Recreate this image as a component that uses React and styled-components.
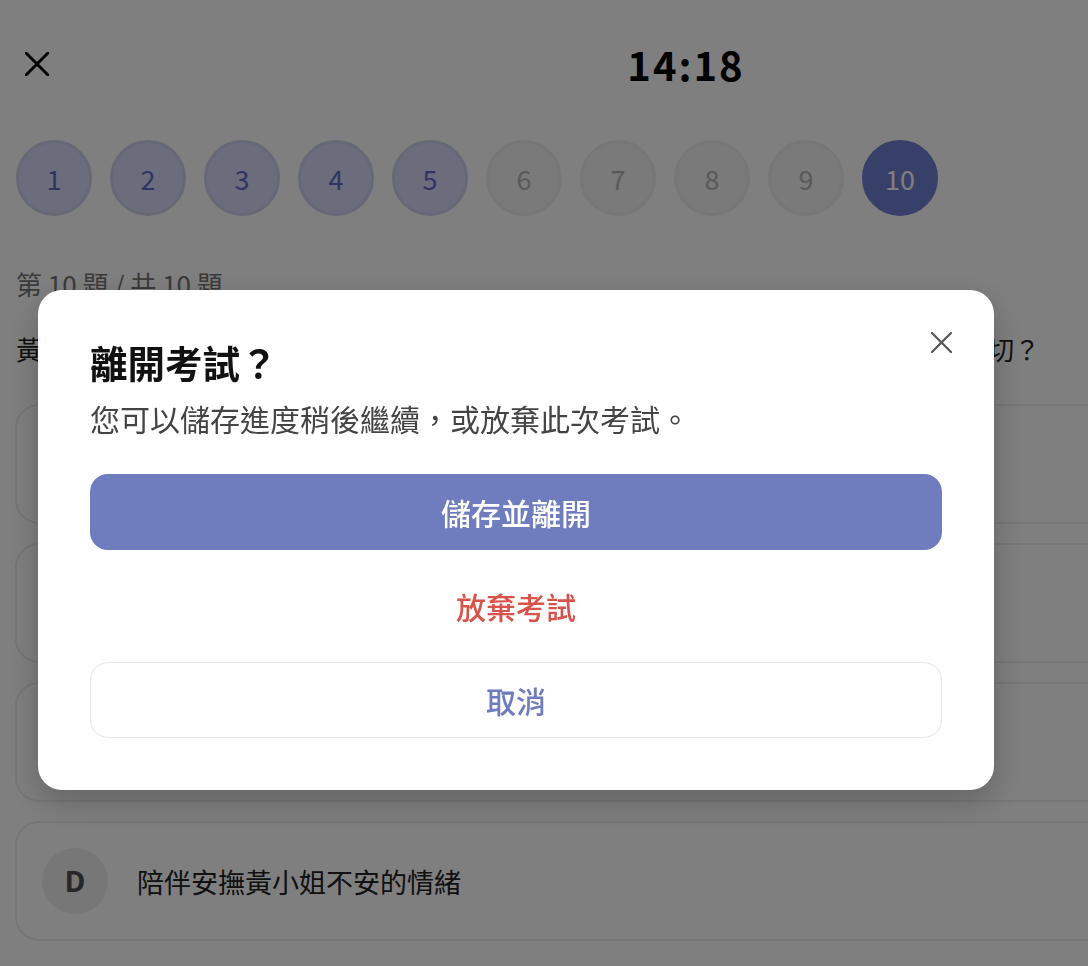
import React from "react";
import styled, { createGlobalStyle } from "styled-components";

const GlobalStyle = createGlobalStyle`
    html, body {
        margin: 0;
        padding: 0;
        overflow: hidden;
        background: #ffffff;
    }
    body {
        font-family: "Noto Sans CJK TC", "Noto Sans", sans-serif;
        color: #222;
    }
    * {
        box-sizing: border-box;
    }
`;

const Page = styled.div`
    width: 1372px;
    height: 966px;
    padding: 0 15px;
`;

const Header = styled.header`
    height: 128px;
    display: grid;
    grid-template-columns: 1fr auto 1fr;
    align-items: center;
    margin-bottom: 4px;
`;

const IconButton = styled.button`
    border: none;
    background: none;
    padding: 0;
    margin: ${(p) => p.margin || "0"};
    display: flex;
    align-items: center;
    justify-content: center;
    justify-self: ${(p) => p.align || "start"};
    color: ${(p) => p.color || "#000"};
    cursor: pointer;
`;

const Timer = styled.div`
    font-size: 40px;
    font-weight: 700;
    letter-spacing: 2px;
    color: #000;
`;

const Steps = styled.div`
    display: flex;
    gap: 18px;
    padding-top: 8px;
    padding-left: 1px;
`;

const Step = styled.div`
    width: 76px;
    height: 76px;
    border-radius: 50%;
    display: flex;
    align-items: center;
    justify-content: center;
    font-size: 27px;
    background: ${(p) =>
        p.state === "current" ? "#7080d2" : p.state === "done" ? "#d8dbf8" : "#f4f4f4"};
    color: ${(p) =>
        p.state === "current" ? "#ffffff" : p.state === "done" ? "#5f6bbe" : "#b2b2b2"};
    border: 3px solid
        ${(p) => (p.state === "current" ? "#7080d2" : p.state === "done" ? "#cdd0ec" : "#eeeeee")};
`;

const Counter = styled.div`
    margin-top: 52px;
    padding-left: 1px;
    font-size: 26px;
    line-height: 32px;
    color: #757575;
`;

const Question = styled.div`
    margin-top: 31px;
    padding-left: 1px;
    font-size: 25.6px;
    line-height: 36px;
    color: #222;
    white-space: nowrap;
`;

const Options = styled.div`
    margin-top: 37px;
    display: flex;
    flex-direction: column;
    gap: 19px;
`;

const OptionCard = styled.div`
    height: 120px;
    border: 2px solid #ececec;
    border-radius: 24px;
    display: flex;
    align-items: center;
    gap: 29px;
    padding-left: 25px;
`;

const OptionLetter = styled.div`
    width: 66px;
    height: 66px;
    border-radius: 50%;
    background: #eeeeee;
    display: flex;
    align-items: center;
    justify-content: center;
    font-family: "Noto Sans", sans-serif;
    font-size: 28px;
    font-weight: 700;
    color: #4e4e4e;
`;

const OptionText = styled.div`
    font-size: 27px;
    color: #222;
`;

const Overlay = styled.div`
    position: fixed;
    inset: 0;
    background: rgba(0, 0, 0, 0.5);
    display: flex;
    align-items: flex-start;
    padding: 290px 0 0 38px;
`;

const Modal = styled.div`
    width: 956px;
    height: 500px;
    background: #ffffff;
    border-radius: 24px;
    box-shadow: 0 12px 32px rgba(0, 0, 0, 0.22);
    padding: 38px 52px 52px;
    display: flex;
    flex-direction: column;
`;

const ModalHead = styled.div`
    display: flex;
    justify-content: space-between;
    align-items: flex-start;
`;

const ModalTitle = styled.h2`
    margin: 10px 0 0;
    font-size: 37.5px;
    line-height: 48px;
    font-weight: 700;
    color: #111;
`;

const ModalText = styled.p`
    margin: 12px 0 0;
    font-size: 30px;
    line-height: 40px;
    color: #444;
`;

const Actions = styled.div`
    margin-top: 36px;
    display: flex;
    flex-direction: column;
    gap: 18px;
`;

const ActionButton = styled.button`
    height: 76px;
    width: 100%;
    border-radius: 18px;
    font-family: "Noto Sans CJK TC", "Noto Sans", sans-serif;
    font-size: 30px;
    font-weight: 500;
    cursor: pointer;
    background: ${(p) => (p.variant === "primary" ? "#6f7cbe" : "#ffffff")};
    color: ${(p) =>
        p.variant === "primary" ? "#ffffff" : p.variant === "danger" ? "#d9534a" : "#6f7cbe"};
    border: ${(p) => (p.variant === "outline" ? "1.5px solid #e6e6e6" : "none")};
`;

const CloseIcon = ({ size, stroke }) => (
    <svg width={size} height={size} viewBox={`0 0 ${size} ${size}`} fill="none">
        <path
            d={`M1 1L${size - 1} ${size - 1}M${size - 1} 1L1 ${size - 1}`}
            stroke="currentColor"
            strokeWidth={stroke}
            strokeLinecap="round"
        />
    </svg>
);

const steps = [1, 2, 3, 4, 5, 6, 7, 8, 9, 10];

const options = [
    { key: "A", text: "立即通知醫師給予鎮靜劑" },
    { key: "B", text: "告訴黃小姐不用擔心手術" },
    { key: "C", text: "轉移話題避免討論手術" },
    { key: "D", text: "陪伴安撫黃小姐不安的情緒" },
];

const App = () => (
    <>
        <GlobalStyle />
        <Page>
            <Header>
                <IconButton margin="0 0 0 10px">
                    <CloseIcon size={24} stroke={3} />
                </IconButton>
                <Timer>14:18</Timer>
                <div />
            </Header>
            <Steps>
                {steps.map((n) => (
                    <Step key={n} state={n === 10 ? "current" : n <= 5 ? "done" : "todo"}>
                        {n}
                    </Step>
                ))}
            </Steps>
            <Counter>第 10 題 / 共 10 題</Counter>
            <Question>
                黃小姐因手術前感到緊張焦慮，一直詢問手術是否會順利，此時護理師的處置何者最適切？
            </Question>
            <Options>
                {options.map((o) => (
                    <OptionCard key={o.key}>
                        <OptionLetter>{o.key}</OptionLetter>
                        <OptionText>{o.text}</OptionText>
                    </OptionCard>
                ))}
            </Options>
        </Page>
        <Overlay>
            <Modal>
                <ModalHead>
                    <ModalTitle>離開考試？</ModalTitle>
                    <IconButton color="#555" align="end" margin="4px -10px 0 0">
                        <CloseIcon size={21} stroke={2.2} />
                    </IconButton>
                </ModalHead>
                <ModalText>您可以儲存進度稍後繼續，或放棄此次考試。</ModalText>
                <Actions>
                    <ActionButton variant="primary">儲存並離開</ActionButton>
                    <ActionButton variant="danger">放棄考試</ActionButton>
                    <ActionButton variant="outline">取消</ActionButton>
                </Actions>
            </Modal>
        </Overlay>
    </>
);

export default App;
